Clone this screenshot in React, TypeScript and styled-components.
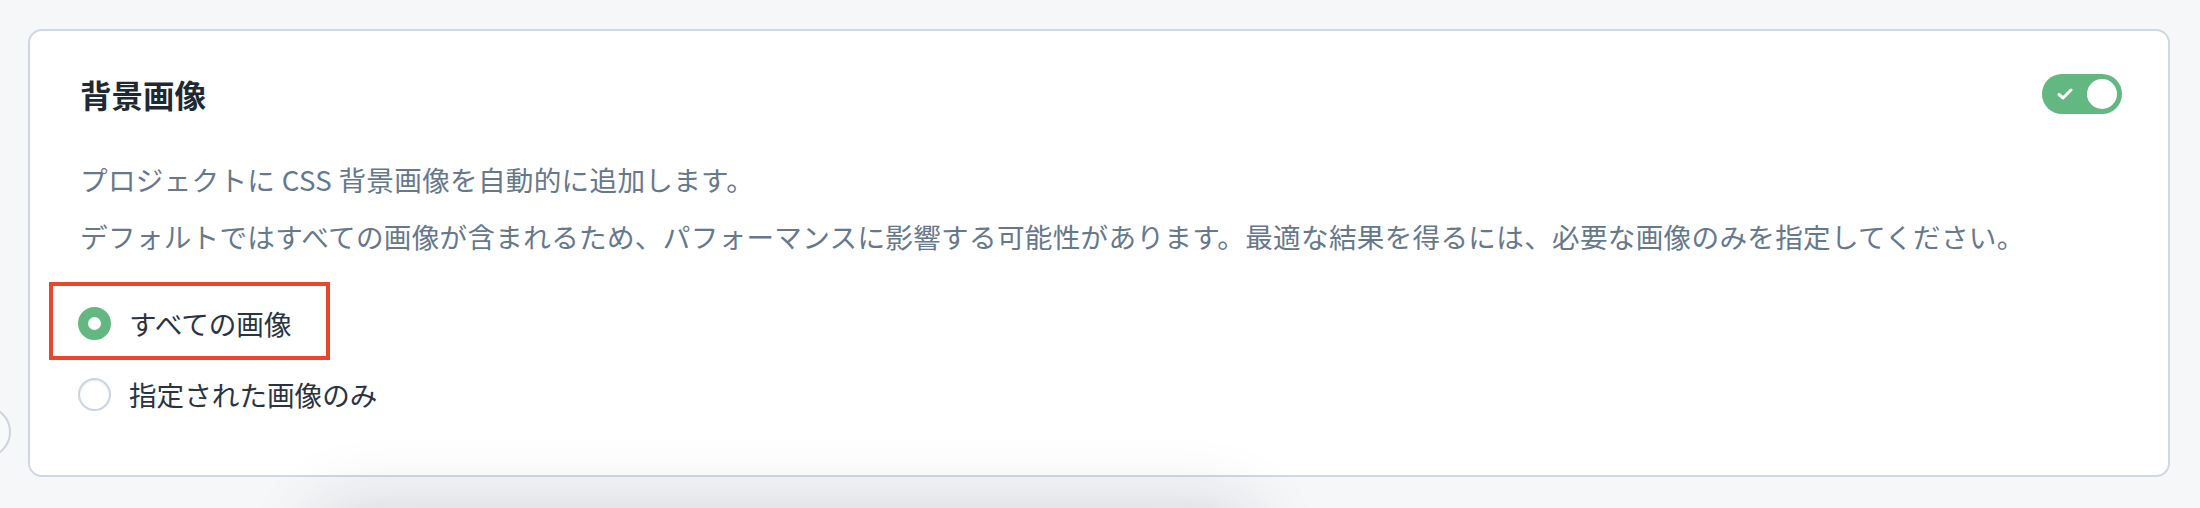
import React, {useState} from "react";
import styled, {createGlobalStyle} from "styled-components";

const GlobalStyle = createGlobalStyle`
  body {
    margin: 0;
    background: #f6f7f9;
    font-family: "Noto Sans CJK JP", "Noto Sans", sans-serif;
  }
`;

const Page = styled.div`
  position: relative;
  height: 508px;
  overflow: hidden;
  padding: 29px 30px 0 28px;
  box-sizing: border-box;
`;

const Card = styled.section`
  background: #ffffff;
  border: 2px solid #cfd8e3;
  border-radius: 14px;
  padding: 43px 46px 59px 50px;
`;

const Head = styled.div`
  display: flex;
  align-items: center;
  justify-content: space-between;
  height: 40px;
`;

const Title = styled.h2`
  margin: 0;
  font-size: 31.5px;
  font-weight: 700;
  color: #1f2933;
  line-height: 40px;
`;

const Switch = styled.button<{on: boolean}>`
  width: 80px;
  height: 40px;
  border: none;
  border-radius: 20px;
  padding: 0 5px;
  background: ${p => p.on ? "#63b882" : "#cbd5e1"};
  display: flex;
  align-items: center;
  justify-content: space-between;
  cursor: pointer;
`;

const Knob = styled.span`
  width: 30px;
  height: 30px;
  border-radius: 50%;
  background: #ffffff;
`;

const Desc = styled.div`
  margin-top: 43px;
  display: flex;
  flex-direction: column;
  gap: 13px;
`;

const Line = styled.p`
  margin: 0;
  font-size: 27.6px;
  letter-spacing: 0.3px;
  line-height: 44px;
  color: #66788c;
`;

const Options = styled.div`
  margin-top: 43px;
  display: flex;
  flex-direction: column;
  gap: 27px;
`;

const Option = styled.label`
  position: relative;
  display: flex;
  align-items: center;
  gap: 18px;
  height: 44px;
  margin-left: -2px;
  cursor: pointer;
`;

const Dot = styled.span<{checked: boolean}>`
  width: 33px;
  height: 33px;
  border-radius: 50%;
  box-sizing: border-box;
  background: #ffffff;
  border: ${p => p.checked ? "10px solid #63b882" : "2px solid #cbd5e1"};
  box-shadow: ${p => p.checked ? "none" : "inset 0 1px 2px rgba(100,116,139,0.15)"};
`;

const Label = styled.span`
  font-size: 27.6px;
  line-height: 44px;
  color: #2a3441;
`;

// annotation frame around the selected option
const Mark = styled.span`
  position: absolute;
  left: -29px;
  top: -19px;
  width: 281px;
  height: 78px;
  box-sizing: border-box;
  border: 4px solid #e9472b;
  pointer-events: none;
`;

const SideButton = styled.div`
  position: absolute;
  left: -41px;
  top: 406px;
  width: 52px;
  height: 52px;
  border-radius: 50%;
  border: 2px solid #cbd4df;
  background: #f8f9fb;
  box-sizing: border-box;
`;

const Shade = styled.div`
  position: absolute;
  left: 330px;
  top: 525px;
  width: 910px;
  height: 60px;
  border-radius: 40px;
  box-shadow: 0 0 70px 22px rgba(20, 28, 40, 0.14);
`;

function Check(){
    return (
        <svg width="16" height="12" viewBox="0 0 16 12" style={{marginLeft: 10}}>
            <path d="M2 6.5 L6 10 L14 2" fill="none" stroke="#ffffff" strokeWidth="3" strokeLinecap="round" strokeLinejoin="round"/>
        </svg>
    );
}

export default function App(){
    const [on, setOn] = useState(true);
    const [pick, setPick] = useState("all");

    return (
        <Page>
            <GlobalStyle/>
            <SideButton/>
            <Card>
                <Head>
                    <Title>背景画像</Title>
                    <Switch on={on} onClick={() => setOn(!on)}>
                        <Check/>
                        <Knob/>
                    </Switch>
                </Head>
                <Desc>
                    <Line>プロジェクトに CSS 背景画像を自動的に追加します。</Line>
                    <Line>デフォルトではすべての画像が含まれるため、パフォーマンスに影響する可能性があります。最適な結果を得るには、必要な画像のみを指定してください。</Line>
                </Desc>
                <Options>
                    <Option onClick={() => setPick("all")}>
                        <Dot checked={pick === "all"}/>
                        <Label>すべての画像</Label>
                        <Mark/>
                    </Option>
                    <Option onClick={() => setPick("some")}>
                        <Dot checked={pick === "some"}/>
                        <Label>指定された画像のみ</Label>
                    </Option>
                </Options>
            </Card>
            <Shade/>
        </Page>
    );
}
